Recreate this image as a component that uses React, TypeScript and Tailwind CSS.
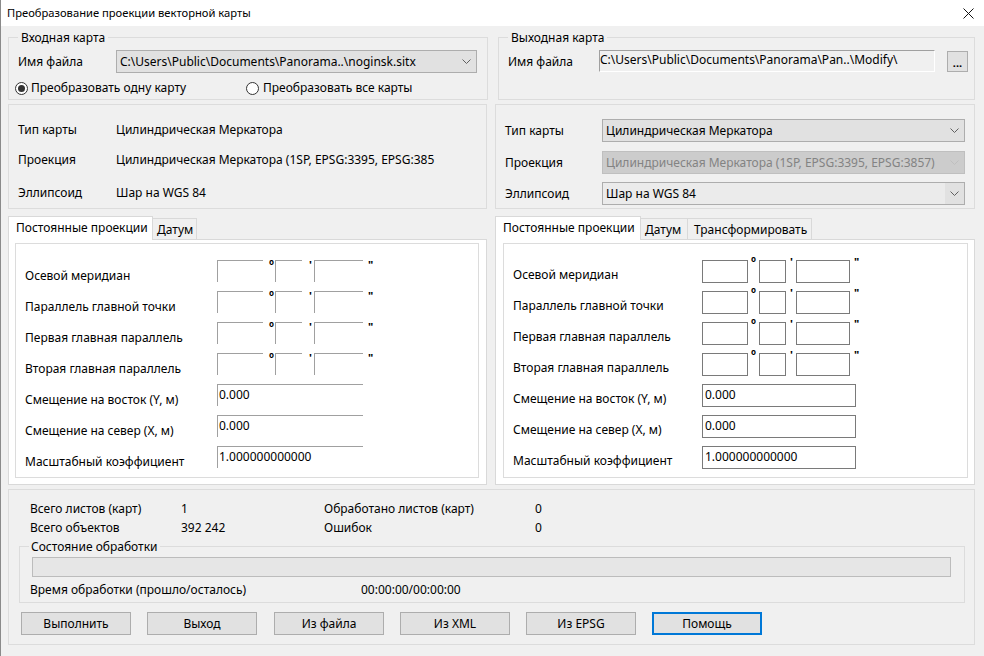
import React from "react";

function Chevron({ color = "#606060" }: { color?: string }) {
  return (
    <svg width="9" height="5" viewBox="0 0 9 5" className="shrink-0">
      <path d="M0.5 0.5L4.5 4.5L8.5 0.5" fill="none" stroke={color} strokeWidth="1" />
    </svg>
  );
}

function Combo({
  text,
  className,
  disabled,
  editable,
}: {
  text: string;
  className: string;
  disabled?: boolean;
  editable?: boolean;
}) {
  if (disabled) {
    return (
      <div className={`h-[23px] border border-[#bfbfbf] bg-[#cccccc] flex items-center pl-[3px] pr-[5px] ${className}`}>
        <div className="flex-1 overflow-hidden whitespace-nowrap text-[#838383] leading-[16px]">{text}</div>
        <div className="ml-[3px]"><Chevron color="#bfbfbf" /></div>
      </div>
    );
  }
  if (editable) {
    return (
      <div className={`h-[23px] border border-[#adadad] bg-[#e1e1e1] flex items-stretch ${className}`}>
        <div className="flex-1 bg-[#ebebeb] flex items-center pl-[3px] overflow-hidden whitespace-nowrap leading-[16px]">{text}</div>
        <div className="w-[19px] flex items-center justify-center"><Chevron /></div>
      </div>
    );
  }
  return (
    <div className={`h-[23px] border border-[#adadad] bg-[#e1e1e1] flex items-center pl-[3px] pr-[5px] ${className}`}>
      <div className="flex-1 overflow-hidden whitespace-nowrap leading-[16px]">{text}</div>
      <div className="ml-[3px]"><Chevron /></div>
    </div>
  );
}

function Radio({ checked }: { checked?: boolean }) {
  return (
    <div className="w-[13px] h-[13px] rounded-full border border-[#333333] bg-white flex items-center justify-center shrink-0">
      {checked && <div className="w-[7px] h-[7px] rounded-full bg-[#333333]" />}
    </div>
  );
}

const labels = [
  "Осевой меридиан",
  "Параллель главной точки",
  "Первая главная параллель",
  "Вторая главная параллель",
];

const offsets = [
  ["Смещение на восток (Y, м)", "0.000"],
  ["Смещение на север (X, м)", "0.000"],
  ["Масштабный коэффициент", "1.000000000000"],
];

function LeftParams() {
  return (
    <div className="flex-1 border border-[#dcdcdc] bg-white pt-[16px] pl-[9px]">
      {labels.map((l) => (
        <div key={l} className="flex h-[31px] items-start">
          <div className="w-[192px] leading-[16px] mt-[8px] whitespace-nowrap">{l}</div>
          <div className="w-[46px] h-[22px] border-t border-l border-[#a0a0a0]" />
          <div className="w-[12px] pl-[6px] text-[8px] font-bold leading-none mt-[-2px]">o</div>
          <div className="w-[27px] h-[22px] border-t border-l border-[#a0a0a0]" />
          <div className="w-[12px] pl-[7px] text-[11px] font-bold leading-none mt-[-1px]">'</div>
          <div className="w-[49px] h-[22px] border-t border-l border-[#a0a0a0]" />
          <div className="pl-[5px] text-[11px] font-bold leading-none mt-[-1px]">"</div>
        </div>
      ))}
      {offsets.map(([l, v]) => (
        <div key={l} className="flex h-[31px] items-start">
          <div className="w-[192px] leading-[16px] mt-[8px] whitespace-nowrap">{l}</div>
          <div className="w-[146px] h-[22px] border-t border-l border-[#a0a0a0] pl-[1px] leading-[16px] pt-[2px]">{v}</div>
        </div>
      ))}
    </div>
  );
}

function RightParams() {
  return (
    <div className="flex-1 border border-[#dcdcdc] bg-white pt-[16px] pl-[9px]">
      {labels.map((l) => (
        <div key={l} className="flex h-[31px] items-start">
          <div className="w-[189px] leading-[16px] mt-[7px] whitespace-nowrap">{l}</div>
          <div className="w-[46px] h-[23px] border border-[#7a7a7a]" />
          <div className="w-[11px] pl-[3px] text-[8px] font-bold leading-none mt-[-5px]">o</div>
          <div className="w-[27px] h-[23px] border border-[#7a7a7a]" />
          <div className="w-[10px] pl-[4px] text-[11px] font-bold leading-none mt-[-4px]">'</div>
          <div className="w-[54px] h-[23px] border border-[#7a7a7a]" />
          <div className="pl-[4px] text-[11px] font-bold leading-none mt-[-4px]">"</div>
        </div>
      ))}
      {offsets.map(([l, v]) => (
        <div key={l} className="flex h-[31px] items-start">
          <div className="w-[189px] leading-[16px] mt-[7px] whitespace-nowrap">{l}</div>
          <div className="w-[154px] h-[23px] border border-[#7a7a7a] pl-[2px] leading-[16px] pt-[2px]">{v}</div>
        </div>
      ))}
    </div>
  );
}

function Button({ text, focused, className = "" }: { text: string; focused?: boolean; className?: string }) {
  return (
    <div
      className={`w-[110px] h-[23px] bg-[#e1e1e1] flex items-center justify-center leading-[16px] ${
        focused ? "border-2 border-[#0078d7]" : "border border-[#adadad]"
      } ${className}`}
    >
      {text}
    </div>
  );
}

export default function App() {
  return (
    <div className="w-[984px] h-[656px] flex flex-col border-l border-[#8a8a8a] bg-[#f0f0f0] text-[12px] text-black font-['Noto_Sans',sans-serif] overflow-hidden">
      {/* Title bar */}
      <div className="h-[26px] bg-white flex items-center pl-[6px] shrink-0">
        <span className="leading-[16px] text-[11.2px]">Преобразование проекции векторной карты</span>
        <svg width="11" height="11" viewBox="0 0 11 11" className="ml-auto mr-[10px]">
          <path d="M0.5 0.5L10.5 10.5M10.5 0.5L0.5 10.5" stroke="#111" strokeWidth="1" />
        </svg>
      </div>

      <div className="flex-1 flex flex-col pl-[7px] pr-[9px]">
        {/* Row 1: group boxes */}
        <div className="flex mt-[11px] h-[63px] shrink-0">
          <div className="relative w-[480px] border border-[#dcdcdc] pt-[12px] pl-[9px]">
            <div className="absolute left-[9px] top-[-8px] px-[3px] bg-[#f0f0f0] leading-[16px]">Входная карта</div>
            <div className="flex items-center h-[23px]">
              <div className="w-[98px] leading-[16px]">Имя файла</div>
              <Combo className="w-[361px]" text="C:\Users\Public\Documents\Panorama..\noginsk.sitx" />
            </div>
            <div className="flex items-center h-[16px] mt-[7px] ml-[-3px]">
              <div className="flex items-center w-[231px]">
                <Radio checked />
                <span className="ml-[3px] leading-[16px]">Преобразовать одну карту</span>
              </div>
              <div className="flex items-center">
                <Radio />
                <span className="ml-[4px] leading-[16px]">Преобразовать все карты</span>
              </div>
            </div>
          </div>
          <div className="relative flex-1 ml-[10px] border border-[#dcdcdc] pt-[12px] pl-[9px]">
            <div className="absolute left-[9px] top-[-8px] px-[3px] bg-[#f0f0f0] leading-[16px]">Выходная карта</div>
            <div className="flex items-start h-[23px]">
              <div className="w-[91px] leading-[16px] mt-[4px]">Имя файла</div>
              <div className="w-[336px] h-[22px] border-t border-l border-[#a0a0a0] border-r border-b border-r-white border-b-white bg-[#f0f0f0] leading-[16px] pt-[1px] whitespace-nowrap overflow-hidden">
                C:\Users\Public\Documents\Panorama\Pan..\Modify\
              </div>
              <div className="ml-[12px] mt-[1px] w-[21px] h-[21px] border border-[#adadad] bg-[#e1e1e1] flex items-end justify-center leading-[14px] pb-[1px] font-bold text-[11px]">
                ...
              </div>
            </div>
          </div>
        </div>

        {/* Row 2 */}
        <div className="flex mt-[4px] h-[105px] shrink-0">
          <div className="w-[479px] border border-[#dcdcdc] pl-[9px] pt-[17px]">
            <div className="flex h-[16px] leading-[16px]">
              <div className="w-[98px]">Тип карты</div>
              <div>Цилиндрическая Меркатора</div>
            </div>
            <div className="flex h-[16px] leading-[16px] mt-[14px]">
              <div className="w-[98px]">Проекция</div>
              <div className="w-[334px] overflow-hidden whitespace-nowrap">Цилиндрическая Меркатора (1SP, EPSG:3395, EPSG:385</div>
            </div>
            <div className="flex h-[16px] leading-[16px] mt-[17px]">
              <div className="w-[98px]">Эллипсоид</div>
              <div>Шар на WGS 84</div>
            </div>
          </div>
          <div className="flex-1 ml-[8px] border border-[#dcdcdc] pl-[9px] pt-[14px]">
            <div className="flex items-center">
              <div className="w-[97px] leading-[16px]">Тип карты</div>
              <Combo className="w-[363px]" text="Цилиндрическая Меркатора" />
            </div>
            <div className="flex items-center mt-[9px]">
              <div className="w-[97px] leading-[16px]">Проекция</div>
              <Combo className="w-[363px]" disabled text="Цилиндрическая Меркатора (1SP, EPSG:3395, EPSG:3857)" />
            </div>
            <div className="flex items-center mt-[8px]">
              <div className="w-[97px] leading-[16px]">Эллипсоид</div>
              <Combo className="w-[363px]" editable text="Шар на WGS 84" />
            </div>
          </div>
        </div>

        {/* Row 3: tab controls */}
        <div className="flex mt-[7px] h-[269px] shrink-0">
          <div className="w-[479px] flex flex-col">
            <div className="flex items-end h-[23px]">
              <div className="relative z-10 w-[145px] h-[24px] mb-[-1px] bg-white border border-b-0 border-[#d9d9d9] pl-[7px] pt-[3px] leading-[16px]">
                Постоянные проекции
              </div>
              <div className="w-[44px] h-[21px] border border-l-0 border-b-0 border-[#d9d9d9] pl-[4px] pt-[3px] leading-[16px]">
                Датум
              </div>
            </div>
            <div className="flex-1 flex border border-[#d9d9d9] bg-white pl-[6px] pr-[7px] pt-[3px] pb-[6px]">
              <LeftParams />
            </div>
          </div>
          <div className="flex-1 ml-[8px] flex flex-col">
            <div className="flex items-end h-[23px]">
              <div className="relative z-10 w-[146px] h-[24px] mb-[-1px] bg-white border border-b-0 border-[#d9d9d9] pl-[7px] pt-[3px] leading-[16px]">
                Постоянные проекции
              </div>
              <div className="w-[47px] h-[21px] border border-l-0 border-b-0 border-[#d9d9d9] pl-[4px] pt-[3px] leading-[16px]">
                Датум
              </div>
              <div className="w-[124px] h-[21px] border border-l-0 border-b-0 border-[#d9d9d9] pl-[6px] pt-[3px] leading-[16px]">
                Трансформировать
              </div>
            </div>
            <div className="flex-1 flex border border-[#d9d9d9] bg-white pl-[7px] pr-[6px] pt-[3px] pb-[6px]">
              <RightParams />
            </div>
          </div>
        </div>

        {/* Bottom section */}
        <div className="mt-[4px] h-[156px] border border-[#dcdcdc] pl-[10px] pt-[11px] shrink-0">
          <div className="flex h-[16px] leading-[16px] pl-[11px]">
            <div className="w-[151px]">Всего листов (карт)</div>
            <div className="w-[143px]">1</div>
            <div className="w-[211px]">Обработано листов (карт)</div>
            <div>0</div>
          </div>
          <div className="flex h-[16px] leading-[16px] pl-[11px] mt-[3px]">
            <div className="w-[151px]">Всего объектов</div>
            <div className="w-[143px]">392 242</div>
            <div className="w-[211px]">Ошибок</div>
            <div>0</div>
          </div>
          <div className="relative mt-[10px] w-[946px] h-[57px] border border-[#dcdcdc] pt-[10px] pl-[12px]">
            <div className="absolute left-[9px] top-[-8px] px-[2px] bg-[#f0f0f0] leading-[16px]">Состояние обработки</div>
            <div className="w-[919px] h-[20px] border border-[#bcbcbc] bg-[#e6e6e6]" />
            <div className="flex h-[16px] leading-[16px] mt-[5px] ml-[-2px]">
              <div className="w-[331px]">Время обработки (прошло/осталось)</div>
              <div>00:00:00/00:00:00</div>
            </div>
          </div>
          <div className="flex mt-[9px] ml-[2px]">
            <Button text="Выполнить" />
            <Button text="Выход" className="ml-[16px]" />
            <Button text="Из файла" className="ml-[17px]" />
            <Button text="Из XML" className="ml-[16px]" />
            <Button text="Из EPSG" className="ml-[16px]" />
            <Button text="Помощь" focused className="ml-[16px]" />
          </div>
        </div>
      </div>
    </div>
  );
}
